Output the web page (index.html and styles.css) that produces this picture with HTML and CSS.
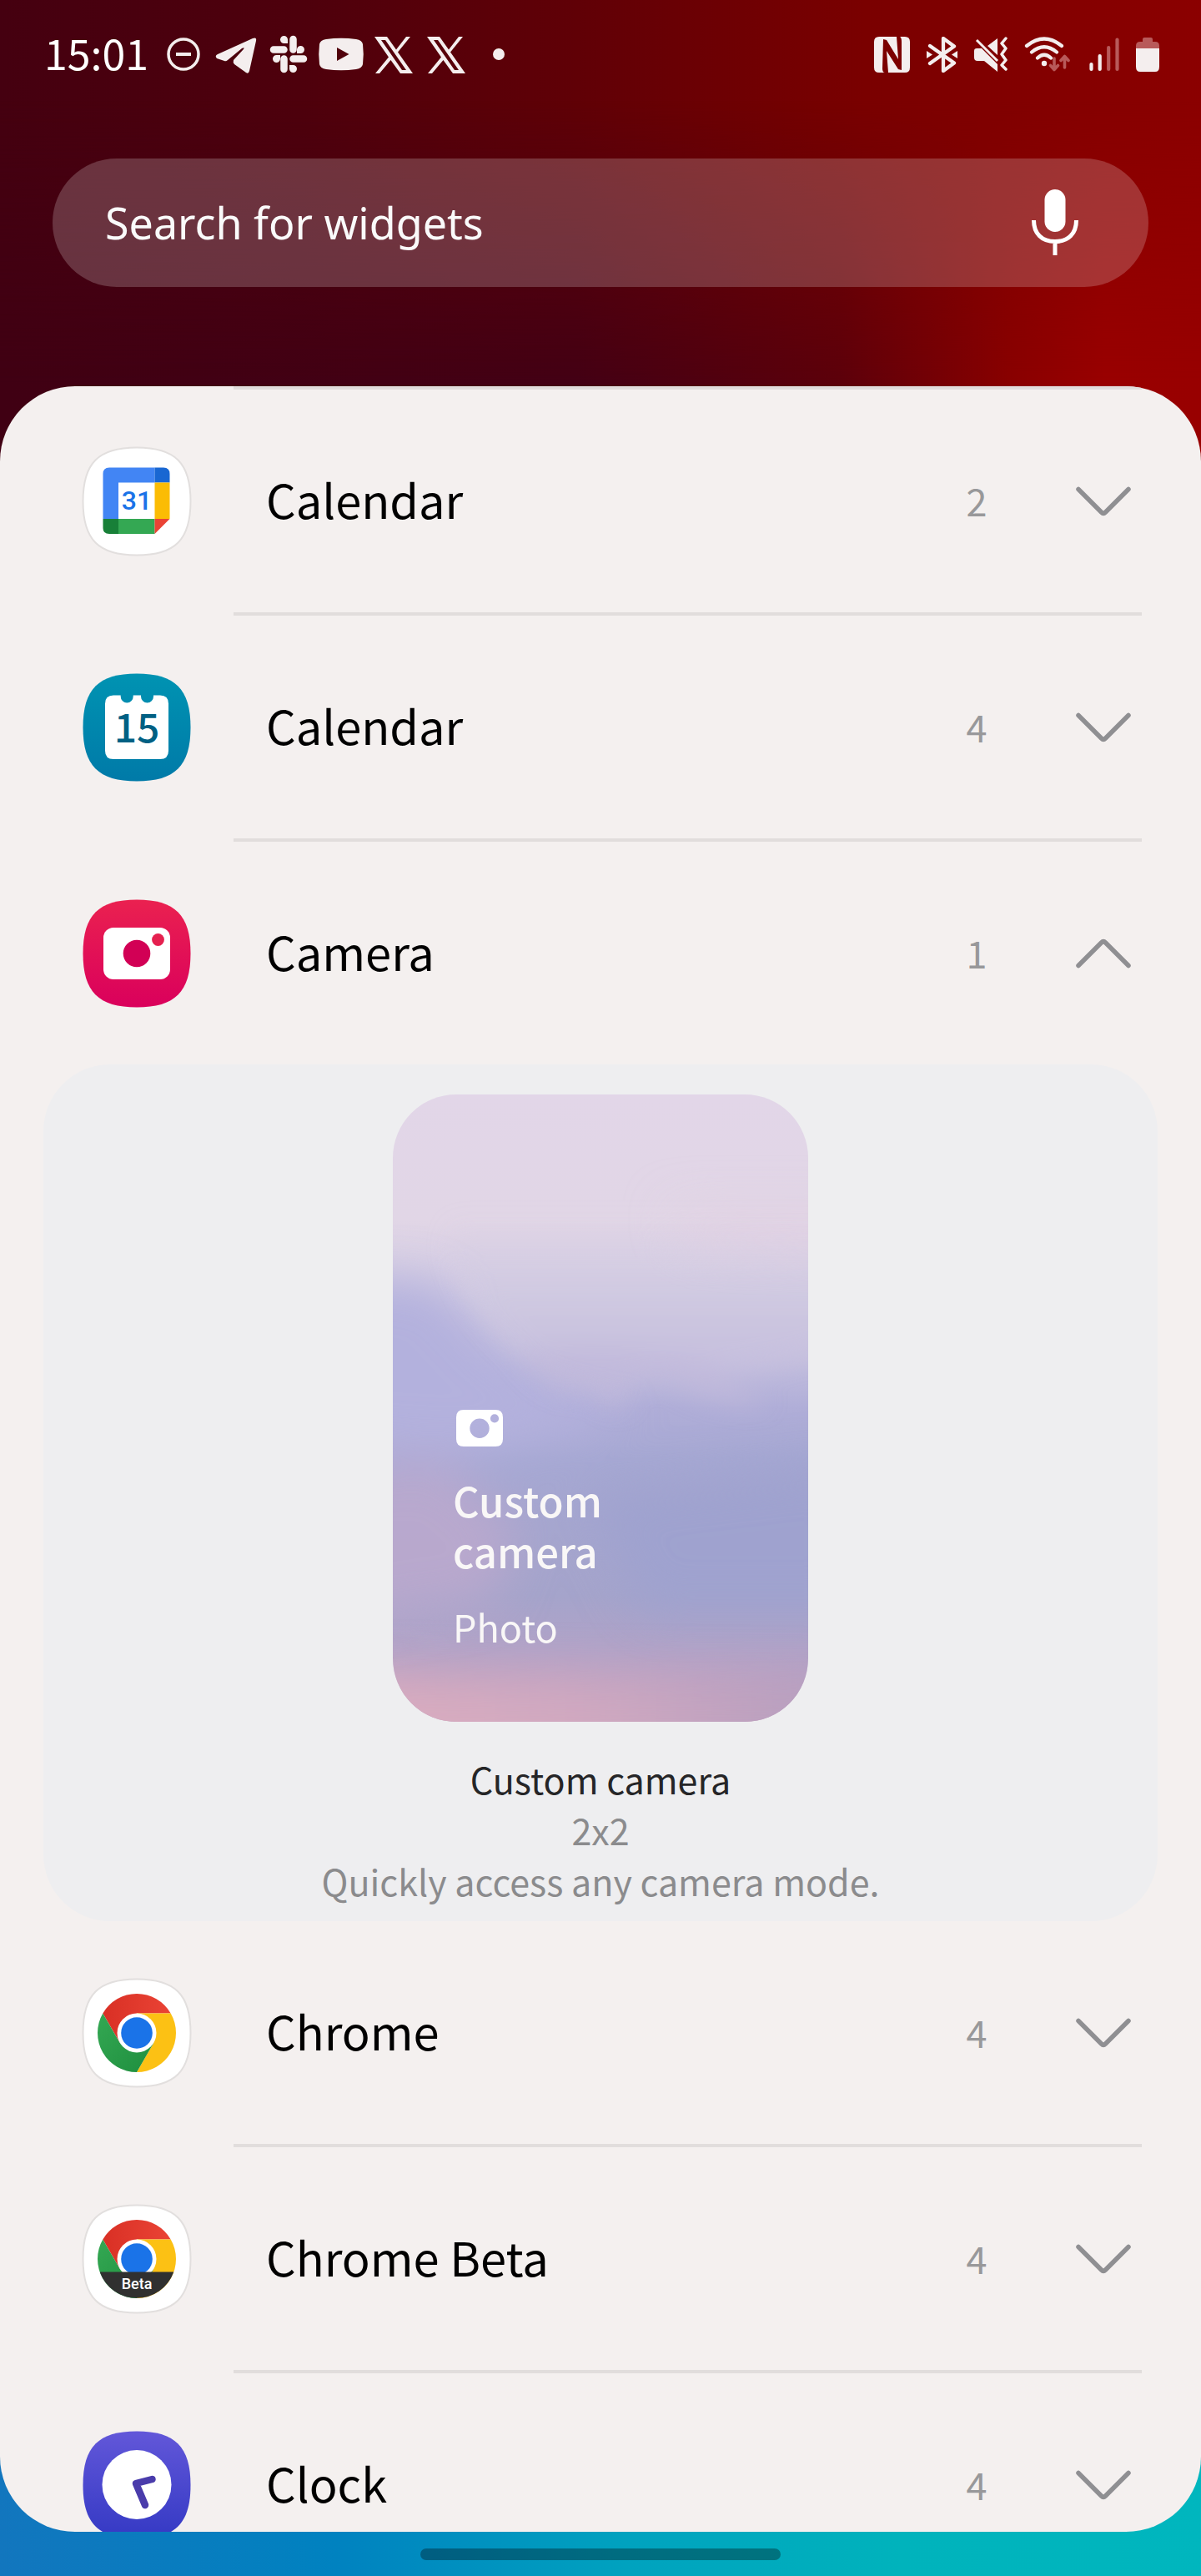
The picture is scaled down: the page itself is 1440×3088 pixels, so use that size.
FILE: index.html
```html
<!DOCTYPE html>
<html lang="en">
<head>
<meta charset="utf-8">
<meta name="viewport" content="width=device-width, initial-scale=1">
<title>Widgets</title>
<link rel="stylesheet" href="styles.css">
</head>
<body>
<svg class="defs" width="0" height="0" aria-hidden="true">
  <defs>
    <path id="squircle" d="M66 1.500C112 1.500 130.500 20 130.500 66S112 130.500 66 130.500 1.500 112 1.500 66 20 1.500 66 1.500Z"/>
    <linearGradient id="teal" x1="0" y1="0" x2="0" y2="1"><stop offset="0" stop-color="#0093b2"/><stop offset="1" stop-color="#007aa8"/></linearGradient>
    <linearGradient id="pink" x1="0" y1="0" x2="0" y2="1"><stop offset="0" stop-color="#ea2150"/><stop offset="1" stop-color="#da005c"/></linearGradient>
    <linearGradient id="violet" x1="0" y1="0" x2="0" y2="1"><stop offset="0" stop-color="#6257d9"/><stop offset="1" stop-color="#3439c4"/></linearGradient>
    <linearGradient id="red" x1="0" y1="0" x2="1" y2="0"><stop offset="0" stop-color="#d93025"/><stop offset="1" stop-color="#ea4335"/></linearGradient>
    <linearGradient id="green" x1="1" y1="1" x2="0" y2="0"><stop offset="0" stop-color="#1e8e3e"/><stop offset="1" stop-color="#34a853"/></linearGradient>
    <g id="chrome">
      <path fill="url(#red)" d="M25.300 42.500A47 47 0 0 1 106.700 42.500H66L45.650 77.750Z"/>
      <path fill="#fcc114" d="M106.700 42.500A47 47 0 0 1 66 113L86.350 77.750 66 42.500Z"/>
      <path fill="url(#green)" d="M66 113A47 47 0 0 1 25.300 42.500L45.650 77.750H86.350Z"/>
      <circle cx="66" cy="66" r="23.500" fill="#fff"/>
      <circle cx="66" cy="66" r="18.800" fill="#1a73e8"/>
    </g>
    <symbol id="chevron" viewBox="0 0 66 36"><path d="M3 3.500 30.500 31Q33 33.500 35.500 31L63 3.500" fill="none" stroke="#8f8f92" stroke-width="5.500" stroke-linecap="round"/></symbol>
    <symbol id="x-logo" viewBox="0 0 46 44"><path fill="currentColor" fill-rule="evenodd" d="M0 0h15l11 15.500L38 0h5L28 18.500 46 44H31L19.500 28 6 44H1L17 24.500ZM8 4 33 40h5L13 4Z"/></symbol>
  </defs>
</svg>

<header class="top">
  <div class="status">
    <time class="clock">15:01</time>
    <div class="notices">
      <svg viewBox="0 0 56 48"><circle cx="28" cy="24" r="18" fill="none" stroke="currentColor" stroke-width="3.500"/><path d="M19 24h18" stroke="currentColor" stroke-width="4"/></svg>
      <svg viewBox="0 0 56 48"><path fill="currentColor" d="M6 24Q2 26 5 29L14 32Q16 33 18 31L35 17Q39 15 37 18L25 31Q24 34 26 36L40 46Q43 48 44 44L52 8Q53 3 48 5Z"/></svg>
      <svg viewBox="0 0 56 48"><g stroke="currentColor" stroke-width="8.500" stroke-linecap="round"><path d="M33.500 6v12.500M22.500 29.500V42M10 18.500h12.500M33.500 29.500H46"/></g><path fill="currentColor" d="M27 11H22.500A4.500 4.500 0 1 1 27 6.500ZM38 23V18.500A4.500 4.500 0 1 1 42.500 23ZM29 37H33.500A4.500 4.500 0 1 1 29 41.500ZM18 25V29.500A4.500 4.500 0 1 1 13.500 25Z"/></svg>
      <svg viewBox="0 0 56 48"><path fill="currentColor" fill-rule="evenodd" d="M10 6Q28 3.500 46 6 53 7 54 12 55.500 24 54 36 53 41 46 42 28 44.500 10 42 3 41 2 36 .5 24 2 12 3 7 10 6ZM23 16V32L37.500 24Z"/></svg>
      <svg viewBox="-5 -3 56 48"><use href="#x-logo" width="46" height="44"/></svg>
      <svg viewBox="-5 -3 56 48"><use href="#x-logo" width="46" height="44"/></svg>
      <svg viewBox="0 0 56 48"><circle cx="28" cy="24" r="7" fill="currentColor"/></svg>
    </div>
    <div class="system">
      <svg width="43" height="43" viewBox="0 0 43 43"><path fill="currentColor" d="M6 0H27L29 27 15 4 11 3 10 38Q10 43 13 43H6Q0 43 0 37V6Q0 0 6 0ZM31 0H37Q43 0 43 6V37Q43 43 37 43H17L15 17 29 39 33 40 33 6Q33 1 31 0Z"/></svg>
      <svg width="37" height="43" viewBox="0 0 37 43"><path d="M4 11 33 31.500 20 41V2L33 11.500 4 32" fill="none" stroke="currentColor" stroke-width="4.300" stroke-linejoin="round" stroke-linecap="round"/><path fill="currentColor" d="M0 17 7 21.500 0 26ZM37 17 30 21.500 37 26Z"/></svg>
      <svg width="40" height="42" viewBox="0 0 40 42"><path fill="currentColor" d="M3 14H9L28 33V42L12 29H4Q0 29 0 25V17Q0 14 3 14ZM16 11 28 2V22Z"/><path d="M3 4 28 29" stroke="currentColor" stroke-width="3"/><path d="M38 2 33 8 38 14 33 21 38 28 33 34 38 39" fill="none" stroke="currentColor" stroke-width="3.500" stroke-linecap="round" stroke-linejoin="round"/></svg>
      <svg width="58" height="42" viewBox="0 0 58 42"><g fill="none" stroke="currentColor" stroke-width="4.200" stroke-linecap="round"><path d="M3 11Q24-6 45 11M9 18.500Q24 6 39 18.500M16 25.500Q24 18 32 25.500"/></g><circle cx="24" cy="32" r="3.200" fill="currentColor"/><g fill="none" stroke="#b85a5a" stroke-width="3.600" stroke-linecap="round" stroke-linejoin="round"><path d="M36 26V39M31.500 34.500 36 39.500 40.500 34.500M48.500 37V24M44 28.500 48.500 23.500 53 28.500"/></g></svg>
      <svg width="36" height="42" viewBox="0 0 36 42"><g stroke-width="4.200" stroke-linecap="round"><path stroke="currentColor" d="M2.500 33v6M12.700 23v16"/><path stroke="#b85a5a" d="M23.200 13v26M33.500 3.500V39"/></g></svg>
      <svg width="28" height="42" viewBox="0 0 28 42"><path fill="#b85a5a" d="M8 3Q8 1 10 1H18Q20 1 20 3V6H23Q28 6 28 11V14H0V11Q0 6 5 6H8Z"/><path fill="currentColor" d="M0 14H28V36Q28 42 23 42H5Q0 42 0 36Z"/></svg>
    </div>
  </div>
  <form class="search" role="search">
    <input class="search-input" type="text" placeholder="Search for widgets" aria-label="Search for widgets">
    <button class="mic" type="button" aria-label="Voice search">
      <svg width="56" height="80" viewBox="0 0 56 80"><rect x="15.500" y="0" width="25" height="51" rx="12.500" fill="#fff"/><path d="M2.500 37C2.500 53 12 62.500 28 62.500S53.500 53 53.500 37M28 62v17" fill="none" stroke="#fff" stroke-width="5"/></svg>
    </button>
  </form>
</header>

<main class="sheet">
  <ul class="apps">
    <li class="app">
      <button class="row" type="button" aria-expanded="false">
        <svg class="icon" viewBox="0 0 132 132"><use href="#squircle" fill="#fff" stroke="#e2dfde" stroke-width="2"/><path fill="#4285f4" d="M33 25.500H87.500V43.500H44V87H25.500V33Q25.500 25.500 33 25.500Z"/><path fill="#1967d2" d="M87.500 25.500H98Q105.500 25.500 105.500 33V43.500H87.500Z"/><path fill="#fbbc04" d="M87.500 43.500h18V87h-18Z"/><path fill="#34a853" d="M44 87H87.500V105H44Z"/><path fill="#188038" d="M25.500 87H44V105H33Q25.500 105 25.500 98Z"/><path fill="#ea4335" d="M87.500 87H105.500L87.500 105Z"/><text class="date-google" x="66" y="76" text-anchor="middle">31</text></svg>
        <span class="name">Calendar</span><span class="count">2</span>
        <svg class="chevron"><use href="#chevron"/></svg>
      </button>
    </li>
    <li class="app">
      <button class="row" type="button" aria-expanded="false">
        <svg class="icon" viewBox="0 0 132 132"><use href="#squircle" fill="url(#teal)"/><path fill="#fff" d="M38 27.500H46.700V29A7.500 7.500 0 0 0 61.700 29V27.500H71V29A7.500 7.500 0 0 0 86 29V27.500H94Q104 27.500 104 37.500V94Q104 104 94 104H38Q28 104 28 94V37.500Q28 27.500 38 27.500Z"/><text class="date-samsung" x="66" y="84" text-anchor="middle">15</text></svg>
        <span class="name">Calendar</span><span class="count">4</span>
        <svg class="chevron"><use href="#chevron"/></svg>
      </button>
    </li>
    <li class="app">
      <button class="row" type="button" aria-expanded="true" aria-controls="camera-widgets">
        <svg class="icon" viewBox="0 0 132 132"><use href="#squircle" fill="url(#pink)"/><rect x="26" y="35" width="80" height="62" rx="12" fill="#fff"/><circle cx="66" cy="66" r="16.300" fill="#d20055"/><circle cx="91.500" cy="49.500" r="7.400" fill="#e5204f"/></svg>
        <span class="name">Camera</span><span class="count">1</span>
        <svg class="chevron open"><use href="#chevron"/></svg>
      </button>
      <section class="panel" id="camera-widgets">
        <div class="widget">
          <svg class="sky" viewBox="0 0 498 752" preserveAspectRatio="none" aria-hidden="true">
            <defs>
              <linearGradient id="dusk" x1="0" y1="0" x2="0" y2="1"><stop offset="0" stop-color="#e2d6e8"/><stop offset=".2" stop-color="#e1d6e6"/><stop offset=".32" stop-color="#d3cce3"/><stop offset=".42" stop-color="#c4bfde"/><stop offset=".5" stop-color="#b0aed8"/><stop offset=".58" stop-color="#a6a8d3"/><stop offset=".8" stop-color="#a5a4cb"/><stop offset=".88" stop-color="#b0a3c8"/><stop offset="1" stop-color="#c2a0bf"/></linearGradient>
              <linearGradient id="haze" x1="0" y1="0" x2="0" y2="1"><stop offset="0" stop-color="#d9d0e4" stop-opacity="0"/><stop offset=".5" stop-color="#cfc9e1"/><stop offset="1" stop-color="#c4bddd"/></linearGradient>
              <linearGradient id="ember" x1="0" y1="0" x2="1" y2="0"><stop offset="0" stop-color="#dcadbf"/><stop offset=".5" stop-color="#cfa8c0"/><stop offset="1" stop-color="#b29dbf"/></linearGradient>
              <filter id="soft" x="-50%" y="-50%" width="200%" height="200%"><feGaussianBlur stdDeviation="28"/></filter>
              <filter id="wisp" x="-50%" y="-50%" width="200%" height="200%"><feGaussianBlur stdDeviation="14"/></filter>
            </defs>
            <rect width="498" height="752" fill="url(#dusk)"/>
            <g filter="url(#soft)">
              <path fill="#b3b1dd" d="M-80 220 50 225 130 310 280 390 100 430-80 420Z"/>
              <path fill="#9fa2cf" d="M230 480 560 440V620H300Z"/>
              <path fill="#bda9cd" d="M-80 450 60 440 150 520 120 610-80 640Z" opacity=".8"/>
              <path fill="#e1d2e3" d="M330 140 560 140 560 210 360 190Z"/>
            </g>
            <g filter="url(#soft)">
              <path fill="url(#ember)" d="M-80 695 560 705V860H-80Z"/>
            </g>
            <g filter="url(#wisp)">
              <path fill="url(#haze)" d="M70 150H540V300Q400 345 320 325 230 345 160 315 100 270 70 190Z"/>
              <path fill="#c0b9db" d="M150 310Q240 290 370 320L450 370Q380 375 330 340L280 345Q285 375 265 375L235 355Q190 365 150 310Z" opacity=".8"/>
            </g>
          </svg>
          <svg class="camera" width="56" height="44" viewBox="0 0 56 44"><path fill="#fff" fill-rule="evenodd" d="M9 0H47Q56 0 56 9V35Q56 44 47 44H9Q0 44 0 35V9Q0 0 9 0ZM28 10.500A11.700 11.700 0 1 0 28 33.900 11.700 11.700 0 1 0 28 10.500ZM46 5.300A5.100 5.100 0 1 0 46 15.500 5.100 5.100 0 1 0 46 5.300Z"/></svg>
          <strong class="widget-title">Custom camera</strong>
          <span class="widget-mode">Photo</span>
        </div>
        <div class="caption">
          <h2 class="caption-title">Custom camera</h2>
          <p>2x2</p>
          <p>Quickly access any camera mode.</p>
        </div>
      </section>
    </li>
    <li class="app">
      <button class="row" type="button" aria-expanded="false">
        <svg class="icon" viewBox="0 0 132 132"><use href="#squircle" fill="#fff" stroke="#e2dfde" stroke-width="2"/><use href="#chrome"/></svg>
        <span class="name">Chrome</span><span class="count">4</span>
        <svg class="chevron"><use href="#chevron"/></svg>
      </button>
    </li>
    <li class="app">
      <button class="row" type="button" aria-expanded="false">
        <svg class="icon" viewBox="0 0 132 132"><use href="#squircle" fill="#fff" stroke="#e2dfde" stroke-width="2"/><use href="#chrome"/><path fill="#303030" d="M21.700 81.500H110.300A47 47 0 0 1 21.700 81.500Z"/><text class="beta" x="66" y="102" text-anchor="middle">Beta</text></svg>
        <span class="name">Chrome Beta</span><span class="count">4</span>
        <svg class="chevron"><use href="#chevron"/></svg>
      </button>
    </li>
    <li class="app">
      <button class="row" type="button" aria-expanded="false">
        <svg class="icon" viewBox="0 0 132 132"><use href="#squircle" fill="url(#violet)"/><circle cx="66" cy="65.500" r="41.500" fill="#fff"/><path d="M84.500 59 65 64 76 90" fill="none" stroke="#4a3cab" stroke-width="8.500" stroke-linecap="round" stroke-linejoin="round"/></svg>
        <span class="name">Clock</span><span class="count">4</span>
        <svg class="chevron"><use href="#chevron"/></svg>
      </button>
    </li>
  </ul>
</main>

<footer class="nav"><span class="handle"></span></footer>
</body>
</html>
```

FILE: styles.css
```css
* {
  box-sizing: border-box;
}

body {
  position: relative;
  display: flex;
  flex-direction: column;
  height: 100vh;
  margin: 0;
  overflow: hidden;
  font-family: "Noto Sans CJK SC", "Noto Sans", sans-serif;
  background: linear-gradient(90deg, #1276be, #0082c0 28%, #00a2bf 52%, #00b3bc 75%, #00b6be);
}

/* Wallpaper behind the header: a bright row fading into a darker one */
body::before,
body::after {
  content: "";
  position: absolute;
  z-index: -1;
  inset: 0 0 auto;
  height: 600px;
  background: linear-gradient(90deg, #450010, #4e000c 25%, #600006 48%, #7a0000 72%, #8b0000);
}

body::after {
  background: linear-gradient(90deg, #400013, #430014 48%, #5c000a 70%, #880000 84%, #990000 92%, #980000);
  -webkit-mask-image: linear-gradient(transparent 120px, #000 460px);
  mask-image: linear-gradient(transparent 120px, #000 460px);
}

button {
  padding: 0;
  border: 0;
  background: none;
  color: inherit;
  font: inherit;
  text-align: left;
}

svg {
  display: block;
  flex: none;
}

.defs {
  position: absolute;
}

.top {
  flex: none;
  padding: 0 63px 119px;
}

.status {
  display: flex;
  align-items: center;
  height: 130px;
  margin: 0 -13px 60px -10px;
  color: #f4eeee;
}

.clock {
  width: 139px;
  padding-bottom: 6px;
  color: #fff;
  font-size: 50px;
  line-height: 60px;
}

.notices {
  display: flex;
  gap: 7px;
}

.notices svg {
  width: 56px;
  height: 48px;
}

.system {
  display: flex;
  align-items: center;
  gap: 20px;
  margin-left: auto;
}

.search {
  display: flex;
  align-items: center;
  height: 154px;
  padding: 0 84px 0 63px;
  border-radius: 77px;
  background: rgba(255, 255, 255, 0.2);
}

.search-input {
  flex: 1;
  min-width: 0;
  padding: 0;
  border: 0;
  outline: 0;
  background: none;
  color: #fff;
  font-family: "Noto Sans", sans-serif;
  font-size: 52px;
  line-height: 72px;
}

.search-input::placeholder {
  color: #fafafa;
  opacity: 1;
}

.sheet {
  flex: 1;
  min-height: 0;
  overflow: hidden;
  border-radius: 90px;
  background: #f4f0ef;
}

.apps {
  margin: 0;
  padding: 0;
  list-style: none;
}

.app::before {
  content: "";
  display: block;
  height: 4px;
  margin: 0 71px 0 280px;
  background: #e1dddc;
}

/* The open panel takes the place of the divider below it */
.app:has(.panel) + .app::before {
  display: none;
}

.row {
  display: flex;
  align-items: center;
  width: 100%;
  height: 267px;
  padding: 0 84px 0 98px;
}

.icon {
  width: 132px;
  height: 132px;
}

.name {
  flex: 1;
  margin-left: 89px;
  padding-bottom: 6px;
  color: #000;
  font-size: 56px;
  line-height: 72px;
}

.count {
  width: 40px;
  margin-right: 99px;
  padding-bottom: 2px;
  color: #98989a;
  font-size: 45px;
  line-height: 61px;
  text-align: center;
}

.chevron {
  width: 66px;
  height: 36px;
}

.chevron.open {
  transform: rotate(180deg);
}

.date-google {
  fill: #1a73e8;
  font: 500 32px Roboto, sans-serif;
}

.date-samsung {
  fill: #006083;
  font-size: 48px;
  font-weight: 500;
}

.beta {
  fill: #fff;
  font: 500 18px Roboto, sans-serif;
}

.panel {
  display: flex;
  flex-direction: column;
  align-items: center;
  margin: 0 52px;
  padding: 36px 0 18px;
  border-radius: 80px;
  background: #eeeef0;
}

.widget {
  position: relative;
  display: flex;
  flex-direction: column;
  justify-content: flex-end;
  width: 498px;
  height: 752px;
  padding: 0 72px 84px;
  overflow: hidden;
  border-radius: 76px;
  color: #f9f7f7;
}

.sky {
  position: absolute;
  inset: 0;
  width: 100%;
  height: 100%;
}

.camera,
.widget-title,
.widget-mode {
  position: relative;
}

.camera {
  margin: 0 4px 33px;
}

.widget-title {
  width: min-content;
  margin-bottom: 30px;
  font-size: 49px;
  font-weight: 500;
  line-height: 61px;
}

.widget-mode {
  font-size: 45px;
  line-height: 61px;
}

.caption {
  padding-top: 38px;
  color: #8b8b8d;
  font-size: 43px;
  line-height: 61px;
  text-align: center;
}

.caption-title,
.caption p {
  margin: 0;
  font-size: inherit;
  font-weight: 400;
}

.caption-title {
  color: #252527;
}

.nav {
  display: flex;
  flex: none;
  justify-content: center;
  height: 53px;
  padding-top: 20px;
}

.handle {
  width: 30%;
  height: 14px;
  border-radius: 7px;
  background: rgba(0, 0, 0, 0.33);
}
```
